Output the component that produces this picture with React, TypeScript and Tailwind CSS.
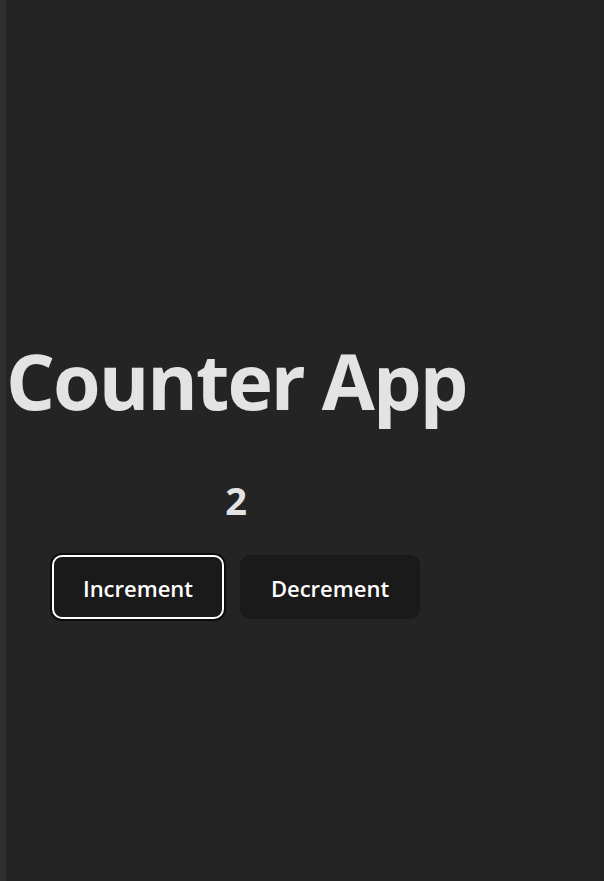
import React, { useState } from "react";

export default function App() {
  const [count, setCount] = useState(2);
  return (
    <div
      className="flex min-h-[881px] w-full bg-[#242424] text-[#e3e3e3]"
      style={{ fontFamily: '"Open Sans", "Noto Sans", sans-serif' }}
    >
      <div className="w-[6px] shrink-0 bg-[#2f2f2f]" />
      <div className="flex w-[460px] flex-col items-center pt-[342px] text-center">
        <h1 className="w-full whitespace-nowrap text-[77px] font-bold leading-none tracking-[-2px]">
          Counter App
        </h1>
        <div className="mt-[62px] text-[38px] font-bold leading-none">{count}</div>
        <div className="mt-[36px] flex gap-4">
          <button
            onClick={() => setCount(count + 1)}
            className="flex h-[64px] w-[172px] items-center justify-center rounded-[10px] border-2 border-white bg-[#1a1a1a] pt-[2px] text-[22px] font-semibold text-white shadow-[0_0_0_2px_#0d0d0d]"
          >
            Increment
          </button>
          <button
            onClick={() => setCount(count - 1)}
            className="flex h-[64px] w-[180px] items-center justify-center rounded-[10px] border-2 border-transparent bg-[#1a1a1a] pt-[2px] text-[22px] font-semibold text-white"
          >
            Decrement
          </button>
        </div>
      </div>
    </div>
  );
}
